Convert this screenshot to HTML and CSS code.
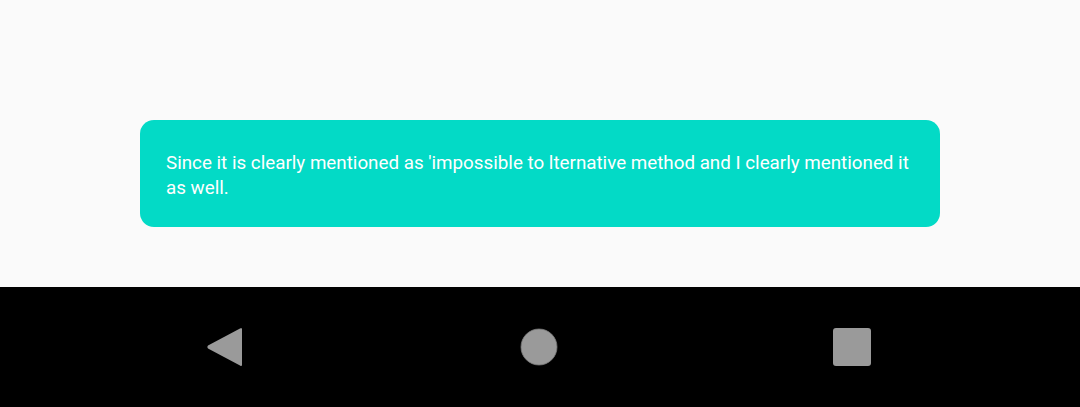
FILE: index.html
```html
<!DOCTYPE html>
<html>
<head>
<meta charset="utf-8">
<link rel="stylesheet" href="styles.css">
</head>
<body>
<div class="screen">
  <main class="content">
    <div class="card">
      <p class="message">Since it is clearly mentioned as 'impossible to lternative method and I clearly mentioned it as well.</p>
    </div>
  </main>
  <nav class="navbar">
    <svg class="nav-icon" width="40" height="42" viewBox="0 0 40 42">
      <path d="M34 2.5 Q36 1 36 3.5 V38.5 Q36 41 34 39.5 L2 22.5 Q0.5 21 2 19.5 Z" fill="#9a9a9a"/>
    </svg>
    <svg class="nav-icon" width="40" height="42" viewBox="0 0 40 42">
      <circle cx="20" cy="21" r="18" fill="#9a9a9a" stroke="#7a7a7a" stroke-width="0.8"/>
    </svg>
    <svg class="nav-icon" width="40" height="42" viewBox="0 0 40 42">
      <rect x="1" y="2" width="38" height="38" rx="3" fill="#9a9a9a"/>
    </svg>
  </nav>
</div>
</body>
</html>
```
FILE: styles.css
```css
* { box-sizing: border-box; }
html, body { margin: 0; padding: 0; }
body {
  width: 1080px;
  height: 407px;
  overflow: hidden;
  background: #fafafa;
  font-family: Roboto, "Noto Sans", sans-serif;
}
.screen {
  display: flex;
  flex-direction: column;
  height: 407px;
}
.content {
  height: 287px;
  padding-top: 120px;
  display: flex;
  justify-content: center;
  align-items: flex-start;
}
.card {
  width: 800px;
  background: #03dac6;
  border-radius: 14px;
  padding: 31px 26px 26px 26px;
}
.message {
  margin: 0;
  color: #ffffff;
  font-size: 18.8px;
  line-height: 25px;
}
.navbar {
  height: 120px;
  background: #000000;
  display: flex;
  align-items: center;
  justify-content: space-between;
  padding: 0 208px 0 206px;
}
.nav-icon { display: block; }
```
